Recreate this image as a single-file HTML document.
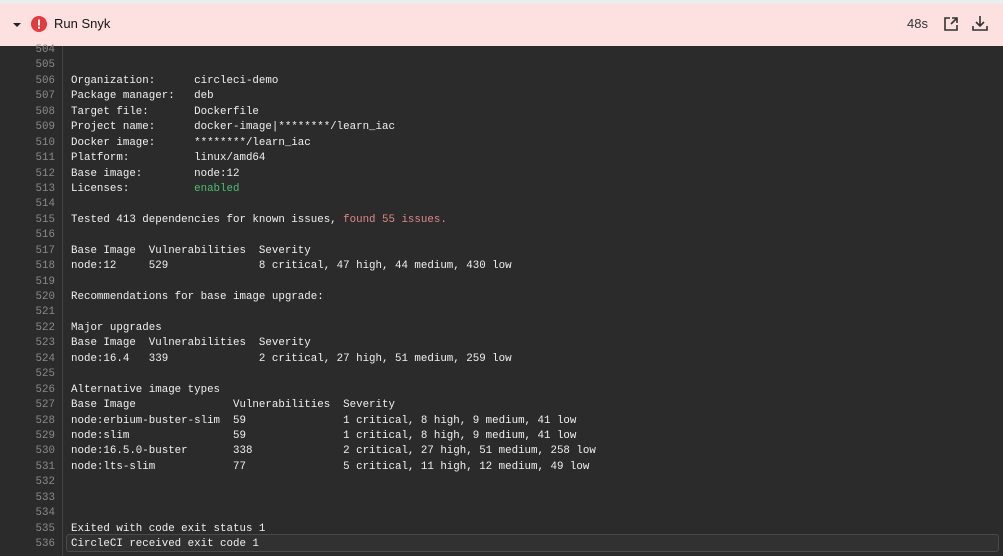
<!DOCTYPE html>
<html><head><meta charset="utf-8"><style>
html,body{margin:0;padding:0;width:1003px;height:556px;overflow:hidden;background:#2b2b2b;}
.top{position:absolute;left:0;top:0;width:1003px;height:4px;background:#ededf0;}
.hdr{position:absolute;left:0;top:4px;width:1003px;height:42px;background:#fde1e0;font-family:"Liberation Sans",sans-serif;font-size:13px;color:#161616;}
.body{position:absolute;left:0;top:46px;width:1003px;height:510px;background:#2b2b2b;}
.gut{position:absolute;left:62px;top:46px;width:1px;height:510px;background:#444;}
pre{margin:0;position:absolute;top:43px;font-family:"Liberation Mono",monospace;font-size:10.8px;line-height:15.44px;}
.nums{left:0;width:55px;text-align:right;color:#8a8a8a;}
.txt{left:71px;color:#f0f0f0;}
.r{color:#e0888a}.g{color:#4cbf72}
.box{position:absolute;left:66px;top:534px;width:931px;height:16px;border:1px solid #4a4a4a;border-radius:3px;background:#313131;}
</style></head><body>
<div class="top"></div>
<div class="hdr">
<svg style="position:absolute;left:12px;top:16px" width="10" height="10"><path d="M1 3 L9 3 L5 7 Z" fill="#222"/></svg>
<svg style="position:absolute;left:31px;top:12px" width="16" height="16"><circle cx="8" cy="8" r="8" fill="#e5393e"/><rect x="7" y="3.5" width="2" height="6" fill="#fff"/><rect x="7" y="10.7" width="2" height="2" fill="#fff"/></svg>
<span style="position:absolute;left:54px;top:12px">Run Snyk</span>
<span style="position:absolute;left:907px;top:12px;color:#333">48s</span>
<svg style="position:absolute;left:943px;top:12px" width="16" height="16" fill="none" stroke="#333" stroke-width="1.6"><path d="M7 2H2v12h12V9"/><path d="M9 2h5v5M14 2L8 8"/></svg>
<svg style="position:absolute;left:972px;top:11px" width="16" height="17" fill="none" stroke="#333" stroke-width="1.6"><path d="M8 1v10M4 7l4 4 4-4"/><path d="M1 11v4h14v-4"/></svg>
</div>
<div class="body"></div>
<div class="gut"></div>
<div class="box"></div>
<pre class="nums">504
505
506
507
508
509
510
511
512
513
514
515
516
517
518
519
520
521
522
523
524
525
526
527
528
529
530
531
532
533
534
535
536</pre>
<pre class="txt">


Organization:      circleci-demo
Package manager:   deb
Target file:       Dockerfile
Project name:      docker-image|********/learn_iac
Docker image:      ********/learn_iac
Platform:          linux/amd64
Base image:        node:12
Licenses:          <span class="g">enabled</span>

Tested 413 dependencies for known issues, <span class="r">found 55 issues.</span>

Base Image  Vulnerabilities  Severity
node:12     529              8 critical, 47 high, 44 medium, 430 low

Recommendations for base image upgrade:

Major upgrades
Base Image  Vulnerabilities  Severity
node:16.4   339              2 critical, 27 high, 51 medium, 259 low

Alternative image types
Base Image               Vulnerabilities  Severity
node:erbium-buster-slim  59               1 critical, 8 high, 9 medium, 41 low
node:slim                59               1 critical, 8 high, 9 medium, 41 low
node:16.5.0-buster       338              2 critical, 27 high, 51 medium, 258 low
node:lts-slim            77               5 critical, 11 high, 12 medium, 49 low



Exited with code exit status 1
CircleCI received exit code 1</pre>
</body></html>
